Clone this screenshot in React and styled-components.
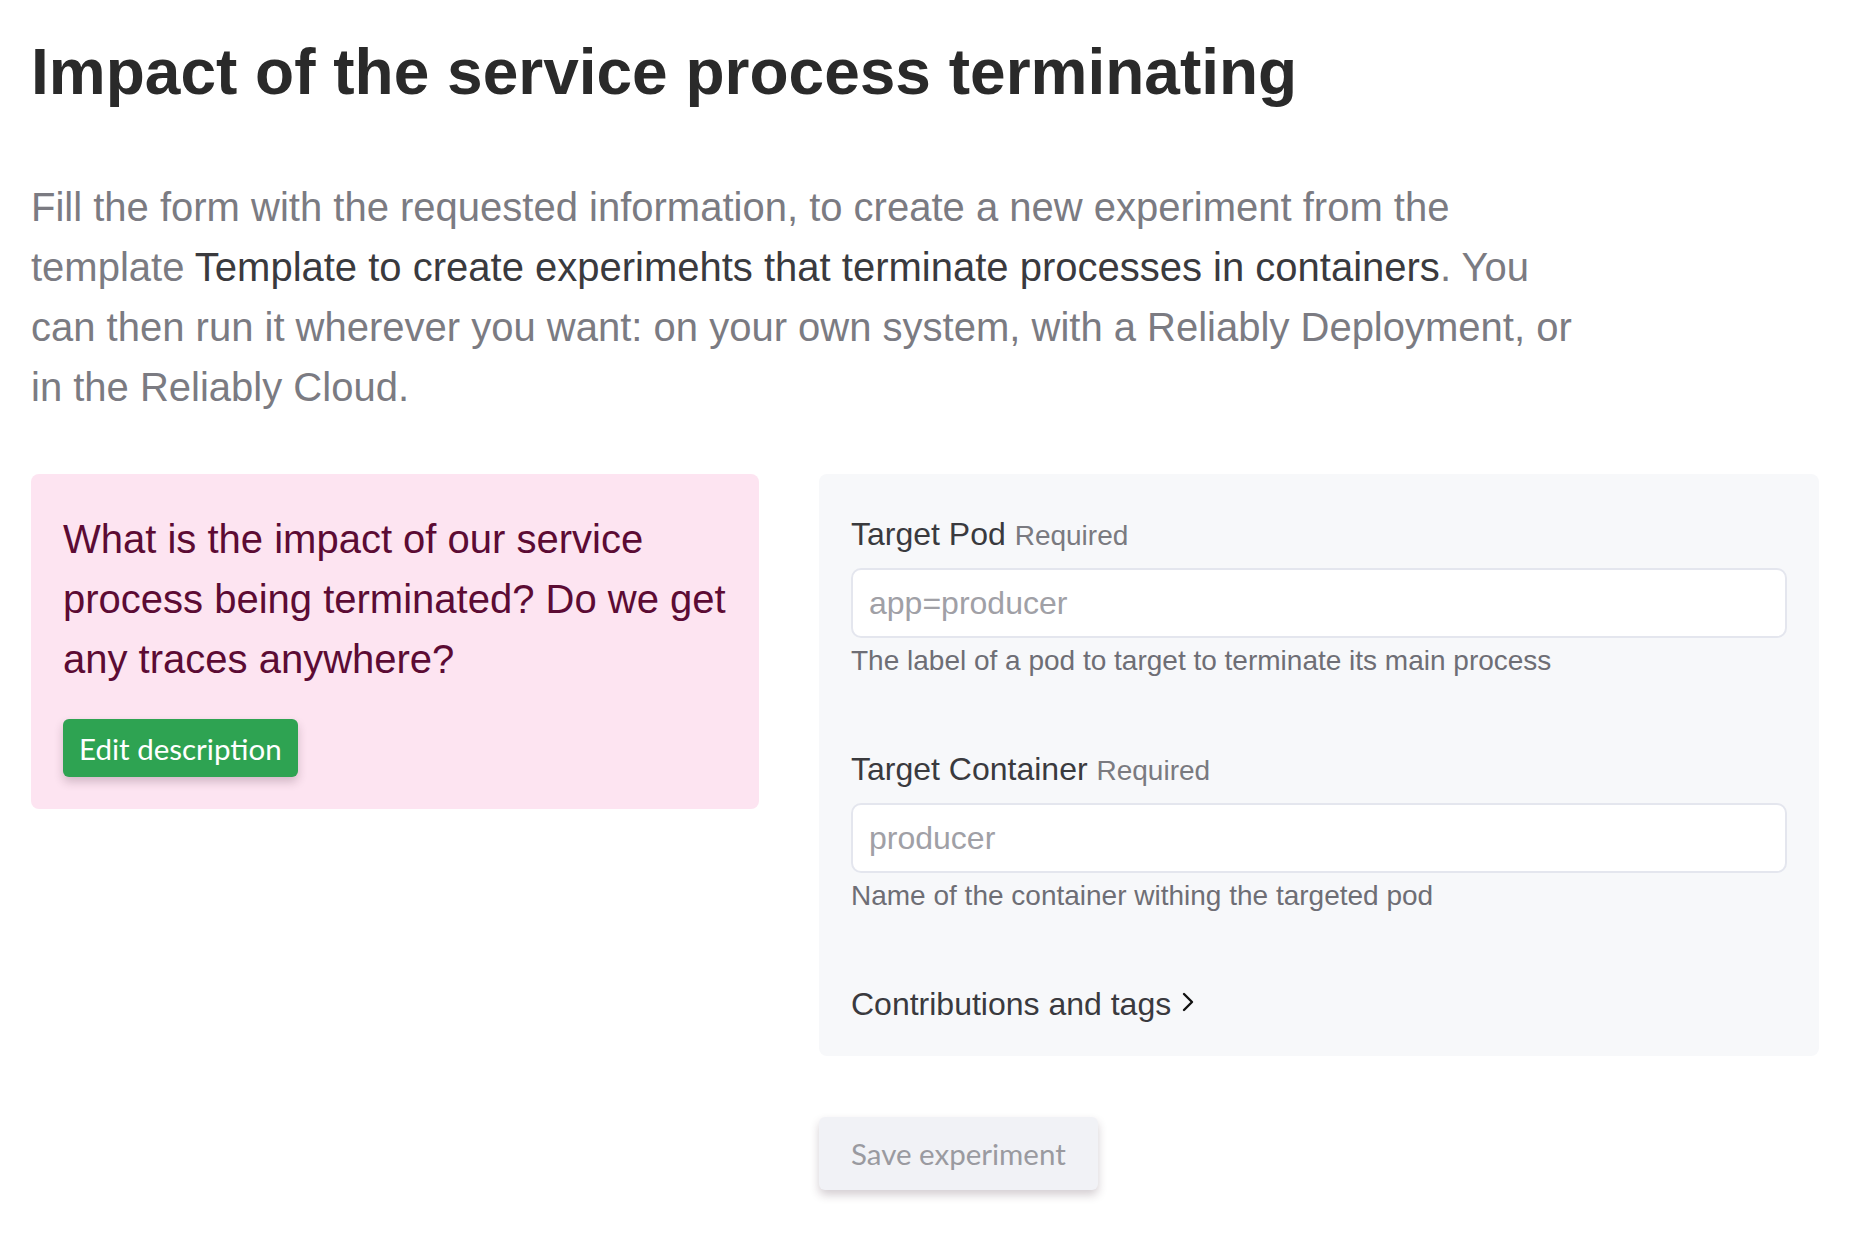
import React from "react";
import styled, { createGlobalStyle } from "styled-components";

const GlobalStyle = createGlobalStyle`
  body {
    margin: 0;
    background: #ffffff;
    font-family: "Liberation Sans", Arial, sans-serif;
  }
`;

const Page = styled.main`
  padding: 35px 36px 48px 31px;
`;

const Title = styled.h1`
  margin: 0;
  font-size: 64px;
  line-height: 74px;
  font-weight: 700;
  color: #2a2a2a;
`;

const Intro = styled.p`
  margin: 68px 0 0;
  max-width: 1560px;
  font-size: 40px;
  line-height: 60px;
  color: #7b7b82;

  strong {
    font-weight: 400;
    color: #3a3a3e;
  }
`;

const Columns = styled.div`
  display: grid;
  grid-template-columns: 728fr 1000fr;
  gap: 60px;
  margin-top: 57px;
  align-items: start;
`;

const DescriptionCard = styled.section`
  background: #fde4f1;
  border-radius: 8px;
  padding: 35px 32px 32px;
`;

const Question = styled.p`
  margin: 0 0 30px;
  font-size: 40px;
  line-height: 60px;
  color: #5c0b34;
`;

const Button = styled.button`
  display: inline-block;
  border: none;
  border-radius: 6px;
  font-family: "Lato", "Noto Sans", sans-serif;
  font-size: 29.5px;
  cursor: pointer;
  background: ${(p) => (p.$primary ? "#2ea352" : "#f1f2f6")};
  color: ${(p) => (p.$primary ? "#ffffff" : "#9a9aa0")};
  height: ${(p) => (p.$primary ? "58px" : "73px")};
  padding: ${(p) => (p.$primary ? "0 16px" : "0 32px")};
  box-shadow: 0 5px 10px rgba(60, 30, 50, 0.22);
`;

const RightColumn = styled.div`
  display: flex;
  flex-direction: column;
  align-items: flex-start;
  gap: 61px;
`;

const FormCard = styled.section`
  align-self: stretch;
  background: #f7f8fa;
  border-radius: 8px;
  padding: 36px 32px 28px;
`;

const Field = styled.div`
  margin-bottom: 63px;
`;

const Label = styled.label`
  display: block;
  margin-bottom: 8px;
  font-size: 32px;
  line-height: 48px;
  color: #3a3a3e;

  span {
    font-size: 28px;
    color: #7a7a80;
  }
`;

const Input = styled.input`
  box-sizing: border-box;
  display: block;
  width: 100%;
  height: 70px;
  padding: 0 16px;
  border: 2px solid #e4e6ee;
  border-radius: 10px;
  background: #ffffff;
  font-family: "Liberation Sans", Arial, sans-serif;
  font-size: 32px;
  color: #333;
  outline: none;

  &::placeholder {
    color: #a0a0a6;
  }
`;

const Help = styled.p`
  margin: 2px 0 0;
  font-size: 28px;
  line-height: 42px;
  color: #6e6e75;
`;

const Toggle = styled.div`
  display: flex;
  align-items: center;
  gap: 10px;
  font-size: 32px;
  line-height: 48px;
  color: #3a3a3e;

  svg {
    margin-top: -4px;
  }
`;

const Chevron = () => (
  <svg width="14" height="20" viewBox="0 0 14 20" fill="none">
    <path d="M3 2l8 8-8 8" stroke="#111" strokeWidth="2.4" strokeLinecap="round" strokeLinejoin="round" />
  </svg>
);

const fields = [
  {
    id: "pod",
    label: "Target Pod",
    placeholder: "app=producer",
    help: "The label of a pod to target to terminate its main process",
  },
  {
    id: "container",
    label: "Target Container",
    placeholder: "producer",
    help: "Name of the container withing the targeted pod",
  },
];

export default function App() {
  return (
    <>
      <GlobalStyle />
      <Page>
        <Title>Impact of the service process terminating</Title>
        <Intro>
          Fill the form with the requested information, to create a new experiment from the
          template <strong>Template to create experimehts that terminate processes in containers</strong>.
          You can then run it wherever you want: on your own system, with a Reliably Deployment, or
          in the Reliably Cloud.
        </Intro>
        <Columns>
          <DescriptionCard>
            <Question>
              What is the impact of our service process being terminated? Do we get any traces
              anywhere?
            </Question>
            <Button $primary>Edit description</Button>
          </DescriptionCard>
          <RightColumn>
            <FormCard>
              {fields.map((f) => (
                <Field key={f.id}>
                  <Label htmlFor={f.id}>
                    {f.label} <span>Required</span>
                  </Label>
                  <Input id={f.id} placeholder={f.placeholder} />
                  <Help>{f.help}</Help>
                </Field>
              ))}
              <Toggle>
                Contributions and tags <Chevron />
              </Toggle>
            </FormCard>
            <Button>Save experiment</Button>
          </RightColumn>
        </Columns>
      </Page>
    </>
  );
}
